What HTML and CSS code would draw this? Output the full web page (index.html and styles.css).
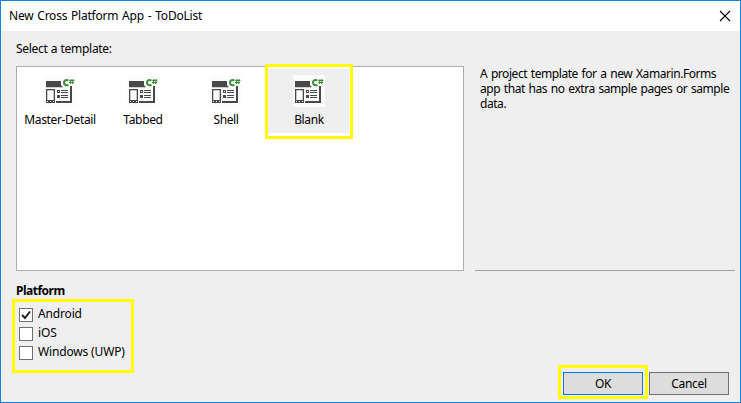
FILE: index.html
```html
<!DOCTYPE html>
<html lang="en">
<head>
<meta charset="utf-8">
<title>New Cross Platform App - ToDoList</title>
<link rel="stylesheet" href="styles.css">
</head>
<body>
<svg class="defs" aria-hidden="true">
  <symbol id="template" viewBox="0 0 32 32">
    <rect width="32" height="32" fill="#fcfcfc"/>
    <path fill="#484848" d="M2 6h15v4l2 2.300H2zM26 11h2v17H12v-2h14zM2 14h9v14H2zM13 15h3v3h-3zM13 20h3v3h-3zM17 15h7v1h-7zM17 17h7v1h-7zM17 20h7v1h-7zM17 22h7v1h-7z"/>
    <path fill="#fcfcfc" d="M3.300 15.300h6.400v9.700H3.300zM14 16h1v1h-1zM3 26h1v1H3zM6 26h1v1H6zM9 26h1v1H9z"/>
    <path fill="none" stroke="#388a34" stroke-width="2" d="M24.500 5.400C21.500 4.200 20 5.500 20 7.600s1.600 3.400 4.500 2.200"/>
    <path fill="none" stroke="#388a34" stroke-width="1.100" d="M27 4l-.600 5M29.200 4l-.600 5M25.300 5.500h5M25 7.500h5"/>
  </symbol>
</svg>
<div class="window">
  <header class="titlebar">
    <span class="title">New Cross Platform App - ToDoList</span>
    <svg class="close" viewBox="0 0 10 10"><path d="M0 0l10 10M10 0L0 10"/></svg>
  </header>
  <main class="content">
    <div class="prompt">Select a template:</div>
    <div class="panes">
      <div class="templates">
        <div class="item"><svg><use href="#template"/></svg><span>Master-Detail</span></div>
        <div class="item"><svg><use href="#template"/></svg><span>Tabbed</span></div>
        <div class="item"><svg><use href="#template"/></svg><span>Shell</span></div>
        <div class="item selected"><svg><use href="#template"/></svg><span>Blank</span></div>
      </div>
      <div class="description">A project template for a new Xamarin.Forms<br>app that has no extra sample pages or sample<br>data.</div>
    </div>
    <div class="platform">Platform</div>
    <div class="bottom">
      <div class="checks">
        <label><span class="box"><svg viewBox="0 0 12 12"><path d="M2 6l3 3 5-6.500"/></svg></span><span>Android</span></label>
        <label><span class="box"></span><span>iOS</span></label>
        <label><span class="box"></span><span>Windows (UWP)</span></label>
      </div>
      <div class="buttons">
        <button class="ok">OK</button>
        <button>Cancel</button>
      </div>
    </div>
  </main>
</div>
</body>
</html>
```
FILE: styles.css
```css
*, *::after { box-sizing: border-box; }
body { margin: 0; font: 12px/15px "Noto Sans", sans-serif; color: #000; background: #efefef; }
.defs { position: absolute; width: 0; height: 0; }
.window { width: 741px; height: 403px; border: 1px solid #1883d7; background: #efefef; display: flex; flex-direction: column; }
.titlebar { height: 30px; background: #fff; display: flex; align-items: center; justify-content: space-between; padding: 0 10px 1px 8px; flex: none; }
.title { letter-spacing: -0.23px; word-spacing: 1px; }
.close { width: 10px; height: 10px; overflow: visible; }
.close path { stroke: #000; stroke-width: 1.1; fill: none; }
.content { flex: 1; }
.prompt { height: 35px; padding: 10px 0 0 15px; letter-spacing: -0.3px; word-spacing: 0.5px; }
.panes { display: flex; margin-left: 15px; height: 205px; }
.templates { width: 448px; background: #fff; border: 1px solid #abadb3; padding: 2px; display: flex; gap: 2px; align-items: flex-start; }
.item { width: 81px; height: 64px; display: flex; flex-direction: column; align-items: center; padding: 6px 0 0 1px; position: relative; white-space: nowrap; letter-spacing: -0.35px; }
.item svg { width: 32px; height: 32px; margin-bottom: 5px; flex: none; }
.selected { background: #efefef; }
.selected::after { content: ""; position: absolute; left: -3px; top: -5px; width: 88px; height: 75px; border: 3px solid #ff0; }
.description { width: 260px; margin-left: 11px; border-bottom: 1px solid #a0a0a0; padding-left: 5px; white-space: nowrap; letter-spacing: -0.44px; word-spacing: 1px; }
.platform { font-weight: 700; padding: 12px 0 0 15px; height: 28px; letter-spacing: -0.5px; }
.bottom { display: flex; justify-content: space-between; padding: 0 11px 0 11px; }
.checks { width: 122px; height: 74px; border: 3px solid #ff0; padding: 6px 0 0 4px; white-space: nowrap; letter-spacing: -0.16px; }
.checks label { display: flex; height: 19px; gap: 5px; }
.checks label > span:last-child { margin-top: -2px; }
.box { width: 14px; height: 14px; background: #fff; border: 1px solid #707070; }
.box svg { display: block; width: 12px; height: 12px; }
.box path { fill: none; stroke: #222; stroke-width: 2; }
.buttons { display: flex; gap: 6px; margin-top: 73px; }
button { width: 80px; height: 23px; padding: 0; border: 1px solid #707070; background: #ddd; font: inherit; color: #000; position: relative; letter-spacing: -0.3px; }
.ok { border-color: #0078d7; }
.ok::after { content: ""; position: absolute; left: -6px; top: -8px; width: 90px; height: 34px; border: 3px solid #ff0; }
```
